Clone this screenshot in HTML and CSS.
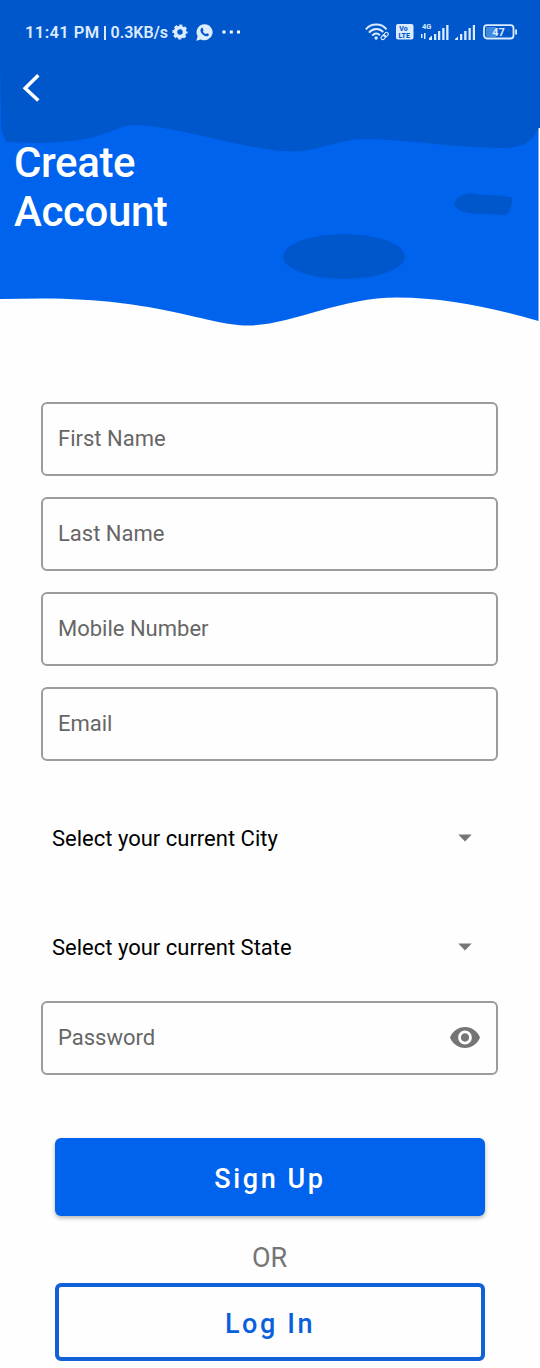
FILE: index.html
```html
<!DOCTYPE html>
<html lang="en">
<head>
<meta charset="utf-8">
<meta name="viewport" content="width=device-width, initial-scale=1">
<title>Create Account</title>
<link rel="stylesheet" href="styles.css">
</head>
<body>
<main class="screen">
  <header class="hero">
    <svg class="hero-art" width="540" height="340" viewBox="0 0 540 340" aria-hidden="true">
      <path fill="#0063ed" d="M0 0H538.500V321C494 308 445 297.500 397 297.500C340 297.500 290 325.500 248 325.500C207 325.500 160 298.500 42 298.500L0 299Z"/>
      <path fill="#0057cc" d="M0 0H540V128H538.500C533 141 524 148 502 148C453 148 405 139 365 139C339 139 318 151.500 292 151.500C251 151.500 172 125 136 125C112 125 108 143 35 143L6 142C4 134 1 134 1 124L0 52Z"/>
      <ellipse fill="#0057cc" cx="344" cy="256.500" rx="61" ry="22.500"/>
      <path fill="#0057cc" d="M454 203.500C457 196 465 192 474 193.500C481 195.500 497 194 512 197.500C512 208 510 215 503 215L473 213.500C463 213 455 209 454 203.500Z"/>
    </svg>
    <div class="hero-content">
      <div class="status-bar">
        <div class="status-left">
          <span class="clock">11:41 PM</span>
          <span class="divider"></span>
          <span class="speed">0.3KB/s</span>
          <svg class="gear" width="16" height="16" viewBox="0 0 16 16">
            <circle cx="8" cy="8" r="4.500" fill="none" stroke="currentColor" stroke-width="3.600"/>
            <circle cx="8" cy="8" r="6.300" fill="none" stroke="currentColor" stroke-width="2.600" stroke-dasharray="2.900 2.048" stroke-dashoffset="1.450"/>
          </svg>
          <svg class="chat" width="17" height="17" viewBox="0 0 17 17">
            <path fill="currentColor" d="M8.700.3a8 8 0 1 1-3.800 15.100L.3 16.700l1.300-4.400A8 8 0 0 1 8.700.3Z"/>
            <path fill="#0057cc" d="M5.400 4.300c.5-.6 1.100-.6 1.400 0l.7 1.600c.2.500-.7 1.200-.6 1.600.5 1.100 1.400 2 2.600 2.500.5.200 1-1 1.500-.8l1.600.8c.6.300.1 1.500-.6 1.900-1.500.9-4-.1-5.600-1.700-1.700-1.600-2.700-4.400-1-5.900Z"/>
          </svg>
          <svg class="more" width="19" height="4" viewBox="0 0 19 4"><path fill="#fff" d="M.5.500h3v3h-3zM7.800.500h3v3h-3zM15 .500h3v3h-3z"/></svg>
        </div>
        <div class="status-right">
          <svg width="24" height="18" viewBox="0 0 24 18" fill="none" stroke="currentColor" stroke-width="2">
            <path d="M.9 6.300C6-.2 16.500-.2 21.500 6.300M4 9.600C8 4.800 14.500 4.800 18.200 9M7.200 12.600c2.600-2.600 5.400-2.600 7.700-.3"/>
            <circle cx="11.100" cy="15" r="1.700" fill="currentColor" stroke="none"/>
            <g stroke-width="1.100" transform="rotate(-45 19.500 13)"><rect x="15.300" y="11.400" width="5" height="3.400" rx="1.700"/><rect x="19" y="11.400" width="5" height="3.400" rx="1.700"/></g>
          </svg>
          <svg class="volte" width="18" height="16" viewBox="0 0 18 16">
            <rect width="17.500" height="15.500" rx="2" fill="currentColor"/>
            <text class="volte-text" x="3.300" y="7.200">Vo</text>
            <text class="volte-text" x="2.500" y="14">LTE</text>
          </svg>
          <svg class="cell-one" width="29" height="18" viewBox="0 0 29 18">
            <text class="net-text" x="2" y="6">4G</text>
            <path fill="currentColor" d="M1 11h1.500v4H1zM4 10h1.500v6H4zM9 15l3-2.500V17H9zM14 11h2.300v6H14zM18 8h2.300v9H18zM22.200 5h2.300v12h-2.300zM26.200 2h2.300v15h-2.300z"/>
          </svg>
          <svg class="cell-two" width="21" height="16" viewBox="0 0 21 16">
            <path fill="currentColor" d="M0 14l3-2.500V15H0zM5 9h2.300v6H5zM9.200 6h2.300v9H9.200zM13.500 3h2.300v12h-2.300zM17.800 0H20v15h-2.200z"/>
          </svg>
          <svg class="battery" width="35" height="16" viewBox="0 0 35 16">
            <rect x="3" y="3" width="10" height="10" rx="1" fill="#4388df"/>
            <rect x="1" y="1.200" width="29.500" height="13.300" rx="3" fill="none" stroke="currentColor" stroke-width="1.800"/>
            <path fill="currentColor" d="M32.200 5.500h1.800v5h-1.800z"/>
            <text class="battery-text" x="9.300" y="11.800">47</text>
          </svg>
        </div>
      </div>
      <svg class="back" width="18" height="28" viewBox="0 0 18 28" fill="none" stroke="#fff" stroke-width="3.500"><path d="M16.300 1.300 3.200 14.200 16.300 26.500"/></svg>
      <h1 class="title">Create<br>Account</h1>
    </div>
  </header>

  <form class="form">
    <div class="field">First Name</div>
    <div class="field">Last Name</div>
    <div class="field">Mobile Number</div>
    <div class="field">Email</div>
    <div class="select select-city"><span>Select your current City</span><svg width="14" height="8" viewBox="0 0 14 8"><path fill="#757575" d="M.3.500h13.400L7 7.500z"/></svg></div>
    <div class="select select-state"><span>Select your current State</span><svg width="14" height="8" viewBox="0 0 14 8"><path fill="#757575" d="M.3.500h13.400L7 7.500z"/></svg></div>
    <div class="field password"><span>Password</span>
      <svg width="30" height="21" viewBox="1 4.500 22 15" preserveAspectRatio="none"><path fill="#757575" d="M12 4.500C7 4.500 2.730 7.610 1 12c1.730 4.390 6 7.500 11 7.500s9.270-3.110 11-7.500c-1.730-4.390-6-7.500-11-7.500zM12 17c-2.760 0-5-2.240-5-5s2.240-5 5-5 5 2.240 5 5-2.240 5-5 5zm0-8c-1.660 0-3 1.340-3 3s1.340 3 3 3 3-1.340 3-3-1.340-3-3-3z"/></svg>
    </div>
    <button class="button primary" type="button">Sign Up</button>
    <p class="or">OR</p>
    <button class="button outline" type="button">Log In</button>
  </form>
</main>
</body>
</html>
```

FILE: styles.css
```css
* { box-sizing: border-box; }
body { margin: 0; background: #fff; font-family: Roboto, "Liberation Sans", sans-serif; }
svg { display: block; flex: none; }
.screen { width: 540px; height: 1368px; overflow: hidden; background: #fefefe; }

.hero { display: grid; height: 340px; }
.hero-art, .hero-content { grid-area: 1 / 1; }
.hero-content { display: flex; flex-direction: column; align-items: flex-start; }

.status-bar {
  display: flex;
  justify-content: space-between;
  width: 540px;
  height: 64px;
  padding: 0 22px 0 25px;
  color: #dcecff;
}
.status-left, .status-right { display: flex; align-items: center; }
.clock { width: 75px; font-size: 16.5px; font-weight: 600; letter-spacing: 0.4px; white-space: nowrap; }
.divider { width: 1.500px; height: 14px; margin: 2px 5px 0 4px; background: currentColor; }
.speed { width: 58px; font-size: 16px; font-weight: 600; white-space: nowrap; }
.gear { margin-left: 3px; }
.chat { margin-left: 8px; }
.more { margin-left: 9px; }
.volte { margin-left: 7px; }
.cell-one { margin-left: 6px; }
.cell-two { margin-left: 6px; margin-top: 1px; }
.battery { margin-left: 7px; }
.volte-text { font-size: 7px; font-weight: 800; fill: #0057cc; }
.net-text { font-size: 7.500px; font-weight: 700; fill: currentColor; }
.battery-text { font-size: 11px; font-weight: 700; fill: currentColor; }

.back { margin: 10px 0 0 22px; }
.title {
  margin: 36px 0 0 14px;
  color: #fff;
  font-size: 42px;
  line-height: 49px;
  font-weight: 500;
  letter-spacing: -0.4px;
}

.form { display: flex; flex-direction: column; padding: 62px 42px 0 41px; }
.field {
  display: flex;
  align-items: center;
  justify-content: space-between;
  height: 74px;
  margin-bottom: 21px;
  padding: 0 15px 1px;
  border: 2px solid #9c9c9c;
  border-radius: 6px;
  color: #666;
  font-size: 22px;
}
.select {
  display: flex;
  align-items: center;
  justify-content: space-between;
  height: 40px;
  padding: 0 26px 0 11px;
  color: #000;
  font-size: 22px;
}
.select-city { margin-top: 36px; }
.select-state { margin-top: 69px; }
.password { margin: 34px 0 0; padding-right: 16px; }

.button {
  height: 78px;
  margin: 0 13px 0 14px;
  padding: 4px 0 0;
  border-radius: 6px;
  font-family: inherit;
  font-size: 27px;
  font-weight: 500;
  letter-spacing: 2.600px;
}
.primary { margin-top: 63px; border: 0; background: #0063ed; color: #fff; box-shadow: 0 2px 4px rgba(0, 0, 0, 0.3); }
.or { margin: 26px 0 8px; color: #757575; font-size: 27px; line-height: 33px; text-align: center; }
.outline { border: 4px solid #1060d8; background: transparent; color: #0960dd; }
```
